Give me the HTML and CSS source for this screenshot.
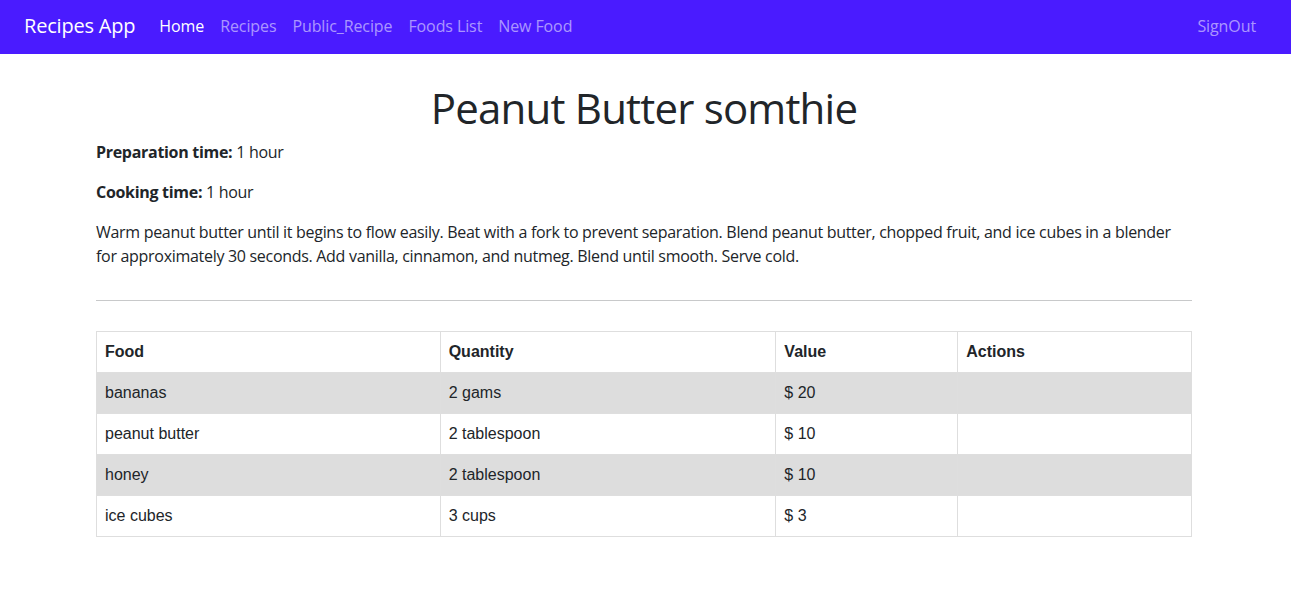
FILE: index.html
```html
<!DOCTYPE html>
<html lang="en">
<head>
<meta charset="utf-8">
<title>Recipes App</title>
<link rel="stylesheet" href="styles.css">
</head>
<body>
<nav class="navbar">
  <a class="brand" href="#">Recipes App</a>
  <ul class="nav-links">
    <li><a class="nav-link active" href="#">Home</a></li>
    <li><a class="nav-link" href="#">Recipes</a></li>
    <li><a class="nav-link" href="#">Public_Recipe</a></li>
    <li><a class="nav-link" href="#">Foods List</a></li>
    <li><a class="nav-link" href="#">New Food</a></li>
  </ul>
  <ul class="nav-links nav-right">
    <li><a class="nav-link" href="#">SignOut</a></li>
  </ul>
</nav>
<main class="container">
  <h1 class="title">Peanut Butter somthie</h1>
  <p class="info"><strong>Preparation time:</strong> 1 hour</p>
  <p class="info"><strong>Cooking time:</strong> 1 hour</p>
  <p class="info">Warm peanut butter until it begins to flow easily. Beat with a fork to prevent separation. Blend peanut butter, chopped fruit, and ice cubes in a blender for approximately 30 seconds. Add vanilla, cinnamon, and nutmeg. Blend until smooth. Serve cold.</p>
  <hr class="divider">
  <table class="foods">
    <colgroup>
      <col class="c1"><col class="c2"><col class="c3"><col class="c4">
    </colgroup>
    <thead>
      <tr><th>Food</th><th>Quantity</th><th>Value</th><th>Actions</th></tr>
    </thead>
    <tbody>
      <tr class="striped"><td>bananas</td><td>2 gams</td><td>$ 20</td><td></td></tr>
      <tr><td>peanut butter</td><td>2 tablespoon</td><td>$ 10</td><td></td></tr>
      <tr class="striped"><td>honey</td><td>2 tablespoon</td><td>$ 10</td><td></td></tr>
      <tr><td>ice cubes</td><td>3 cups</td><td>$ 3</td><td></td></tr>
    </tbody>
  </table>
</main>
</body>
</html>
```
FILE: styles.css
```css
* { box-sizing: border-box; }
body {
  margin: 0;
  font-family: "Open Sans", "Noto Sans", sans-serif;
  font-size: 16px;
  line-height: 24px;
  color: #212529;
  background: #fff;
}
.navbar {
  height: 54px;
  background: #4a1bff;
  display: flex;
  align-items: center;
  padding: 0 27px 2px 24px;
}
.brand {
  color: #fff;
  text-decoration: none;
  font-size: 20px;
  line-height: 30px;
  margin-right: 16px;
  letter-spacing: -0.2px;
}
.nav-links {
  list-style: none;
  margin: 0;
  padding: 0;
  display: flex;
}
.nav-right { margin-left: auto; }
.nav-link {
  display: block;
  padding: 8px 8px;
  color: rgba(255, 255, 255, 0.55);
  text-decoration: none;
  font-size: 16px;
  letter-spacing: -0.1px;
}
.nav-link.active { color: #fff; }
.container {
  margin: 0 99px 0 96px;
}
.title {
  margin: 30px 0 8px;
  font-size: 42px;
  line-height: 48px;
  font-weight: 500;
  text-align: center;
  letter-spacing: -0.8px;
}
.info {
  margin: 0 0 16px;
  letter-spacing: -0.3px;
}
.info strong { font-weight: 700; }
.divider {
  margin: 32px 0 30px;
  border: 0;
  border-top: 1px solid #c8c9ca;
}
.foods {
  width: 100%;
  border-collapse: collapse;
  font-family: "Liberation Sans", Arial, sans-serif;
  font-size: 16px;
  line-height: 24px;
}
.c1 { width: 344px; }
.c2 { width: 336px; }
.c3 { width: 182px; }
.c4 { width: 234px; }
.foods th, .foods td {
  border: 1px solid #dedede;
  padding: 8px 8px;
  text-align: left;
  vertical-align: top;
}
.foods th { font-weight: 700; }
.striped td { background: #dddddd; }
```
